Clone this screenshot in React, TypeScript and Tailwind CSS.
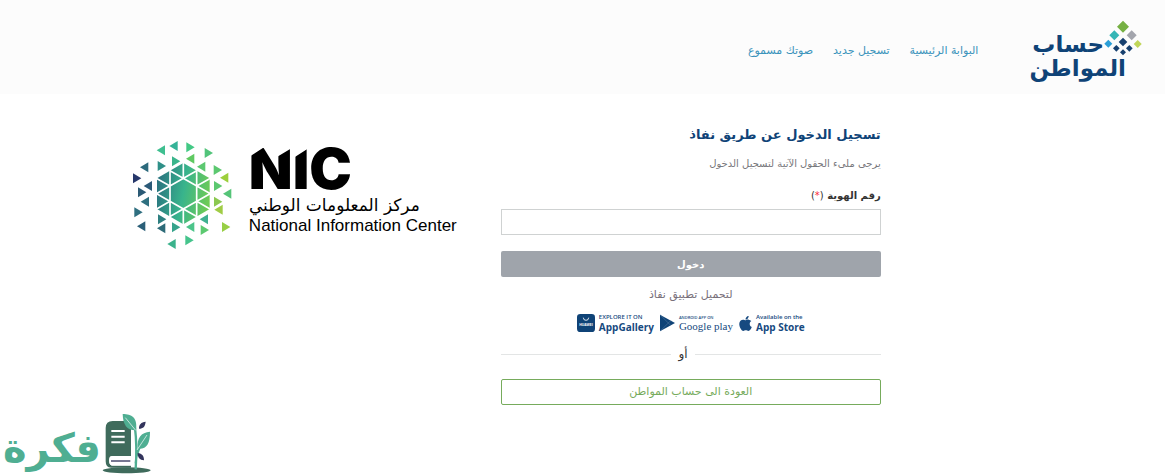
import React from 'react'
import { FaApple } from 'react-icons/fa'

const navLinks = [
    { title: 'البوابة الرئيسية', href: '#home' },
    { title: 'تسجيل جديد', href: '#register' },
    { title: 'صوتك مسموع', href: '#voice' },
]

// x, y, direction, color
const triangles: [number, number, 'l' | 'r', string][] = [
    [117, 61, 'l', '#3fbf90'],
    [155, 48, 'l', '#35b398'],
    [205, 52, 'r', '#43c985'],
    [260, 69, 'r', '#52c47a'],
    [205, 86, 'l', '#5fc962'],
    [162, 94, 'r', '#3ab58c'],
    [119, 108, 'r', '#2f9088'],
    [67, 112, 'l', '#2c6a7c'],
    [45, 145, 'r', '#27386b'],
    [78, 168, 'l', '#2b5a78'],
    [60, 187, 'r', '#2b5a75'],
    [69, 215, 'l', '#2f7080'],
    [49, 247, 'r', '#2f6f80'],
    [58, 289, 'l', '#2b5f78'],
    [118, 295, 'l', '#2d6b78'],
    [120, 268, 'r', '#2e7f80'],
    [162, 292, 'r', '#37a48c'],
    [205, 291, 'l', '#4cc48a'],
    [248, 300, 'r', '#5cc970'],
    [246, 268, 'l', '#3fb091'],
    [312, 291, 'r', '#98cf45'],
    [202, 331, 'r', '#45c48c'],
    [149, 342, 'l', '#3bb28c'],
    [290, 239, 'l', '#a0cc45'],
    [288, 215, 'r', '#8cc850'],
    [316, 191, 'l', '#55c478'],
    [288, 168, 'r', '#5cc870'],
    [307, 143, 'l', '#9ccf3c'],
    [287, 120, 'r', '#5cc870'],
    [238, 110, 'l', '#5cc870'],
]

// center x, center y, half diagonal, color
const diamonds: [number, number, number, string][] = [
    [341, 50, 18, '#76b043'],
    [315, 76, 15, '#35b5b5'],
    [367, 76, 15, '#a3a5ad'],
    [297, 101, 12, '#2a9fd8'],
    [385, 102, 12, '#c0d658'],
    [341, 96, 13, '#17406f'],
    [321, 115, 10, '#17406f'],
    [360, 115, 10, '#17406f'],
    [341, 127, 9, '#17406f'],
]

const CitizenLogo = () => {
    return (
        <a href="#home" className="block font-bold text-[#0f4377] text-[23px] leading-[24px] whitespace-nowrap">
            <span className="flex items-end">
                <svg className="w-[38px] h-[36px] shrink-0" viewBox="284 30 114 108" aria-hidden="true">
                    {diamonds.map(([x, y, r, color]) => (
                        <path key={`${x}-${y}`} fill={color} d={`M${x} ${y - r}L${x + r} ${y}L${x} ${y + r}L${x - r} ${y}Z`} />
                    ))}
                </svg>
                <span>حساب</span>
            </span>
            <span className="block pr-4">المواطن</span>
        </a>
    )
}

const NicLogo = () => {
    return (
        <div dir="ltr" className="flex items-start text-black">
            <svg className="w-[100px] h-[110px] shrink-0" viewBox="30 30 300 330" aria-hidden="true">
                <defs>
                    <linearGradient id="nic" gradientUnits="userSpaceOnUse" x1="105" y1="170" x2="263" y2="200">
                        <stop offset="0" stopColor="#2b7580" />
                        <stop offset="0.5" stopColor="#38b48c" />
                        <stop offset="1" stopColor="#6fcb55" />
                    </linearGradient>
                </defs>
                <path fill="url(#nic)" d="M184 99L263 145V237L184 283L105 237V145Z" />
                <path
                    fill="none"
                    stroke="#fff"
                    strokeWidth="5"
                    d="M144 118V264M224 118V264M184 95V145M184 237V287M100 193L228 120M100 189L228 262M268 193L140 120M268 189L140 262M100 143L144 168M100 239L144 214M268 143L224 168M268 239L224 214"
                />
                {triangles.map(([x, y, dir, color]) => (
                    <path
                        key={`${x}-${y}`}
                        fill={color}
                        d={dir === 'l' ? `M${x - 13} ${y}L${x + 12} ${y - 15}V${y + 15}Z` : `M${x + 13} ${y}L${x - 12} ${y - 15}V${y + 15}Z`}
                    />
                ))}
            </svg>
            <div className="ml-[17px] mt-[6px] whitespace-nowrap">
                <div className="font-[Inter,sans-serif] font-black text-[57px] leading-[46px] [clip-path:polygon(0_11px,14px_2px,27px_2px,28px_11px,43px_2px,46px_2px,46px_11px,60px_2px,60px_-4px,100%_-4px,100%_100%,0_100%)]">NIC</div>
                <div dir="rtl" className="mt-[2px] w-[171px] text-[17px] leading-[22px] text-right">مركز المعلومات الوطني</div>
                <div className="font-['Liberation_Sans',sans-serif] text-[17px] leading-[20px]">National Information Center</div>
            </div>
        </div>
    )
}

const Stores = () => {
    return (
        <div dir="ltr" className="mt-[6px] flex h-5 justify-center gap-[6px] whitespace-nowrap font-['Open_Sans',sans-serif] text-[#174a80]">
            <a href="#appgallery" className="flex items-center gap-1">
                <svg className="w-[18px] h-[18px]" viewBox="0 0 54 54" aria-hidden="true">
                    <rect width="54" height="54" rx="10" fill="#0f4377" />
                    <path d="M19 11a8 8 0 0 0 16 0" fill="none" stroke="#fff" strokeWidth="2.5" />
                    <text x="27" y="37" textAnchor="middle" fontSize="10" fontWeight="700" fill="#fff">HUAWEI</text>
                </svg>
                <span className="block">
                    <span className="block text-[6px] leading-[7px] font-semibold">EXPLORE IT ON</span>
                    <span className="block text-[10px] leading-[12px] font-bold">AppGallery</span>
                </span>
            </a>
            <a href="#googleplay" className="flex items-center gap-1">
                <svg className="w-[15px] h-[18px]" viewBox="0 0 45 54" aria-hidden="true">
                    <path d="M0 2L45 27L0 52Z" fill="#0f4377" />
                    <path d="M1 3L33 35M1 51L33 19" stroke="#5f83a8" strokeWidth="1.5" />
                </svg>
                <span className="block">
                    <span className="block text-[4px] leading-[5px] font-semibold">ANDROID APP ON</span>
                    <span className="block font-['Liberation_Serif',serif] text-[11px] leading-[12px]">Google play</span>
                </span>
            </a>
            <a href="#appstore" className="flex items-center gap-1">
                <FaApple className="w-[13px] h-[17px]" />
                <span className="block">
                    <span className="block text-[6px] leading-[7px] font-semibold">Available on the</span>
                    <span className="block text-[10px] leading-[12px] font-bold">App Store</span>
                </span>
            </a>
        </div>
    )
}

const Watermark = () => {
    return (
        <div className="absolute bottom-0 left-0 flex items-end text-[#4fae92]">
            <svg className="w-[50px] h-[62px]" viewBox="300 36 150 186" aria-hidden="true">
                <ellipse cx="377" cy="211" rx="72" ry="9" fill="#3f6b5c" />
                <path d="M314 84Q314 63 335 63H390V168H332Q324 168 324 181T332 197H390V203H330Q314 203 314 184Z" fill="#3f6b5c" />
                <path d="M332 171H390V196H332Q325 194 325 183T332 171Z" fill="#fff" />
                <path d="M330 183H388" stroke="#33345c" strokeWidth="4" />
                <path d="M331 93H371M331 110H371M331 127H371" stroke="#fff" strokeWidth="6" />
                <path d="M404 208C407 160 408 130 402 84L374 58M404 190C405 160 414 142 436 110" fill="none" stroke="#4fae92" strokeWidth="7" />
                <path d="M365 42C392 42 410 52 405 91C378 92 366 75 365 42Z" fill="#4fae92" />
                <path d="M447 95C447 130 437 149 410 146C407 112 420 98 447 95Z" fill="#4fae92" />
                <path d="M373 53L404 91M438 105L408 150" stroke="#fff" strokeWidth="2" />
                <path d="M434 65C432 80 427 86 414 86C414 73 420 67 434 65ZM410 159C424 161 429 168 429 181C416 180 410 173 410 159Z" fill="#33345c" />
            </svg>
            <span className="mb-1 ml-[3px] font-bold text-[40px] leading-[44px]">فكرة</span>
        </div>
    )
}

const App = () => {
    return (
        <div dir="rtl" className="relative min-h-screen bg-white font-['DejaVu_Sans',sans-serif]">
            <header className="flex h-[94px] items-start bg-[#fcfcfc] pr-[23px]">
                <div className="mt-5">
                    <CitizenLogo />
                </div>
                <nav className="mt-[41px] mr-[51px] flex gap-5 whitespace-nowrap text-[11px] leading-5 text-[#3a93bb]">
                    {navLinks.map((link) => (
                        <a key={link.href} href={link.href}>{link.title}</a>
                    ))}
                </nav>
            </header>

            <main className="flex items-start gap-11 pt-7 pr-[24.4%]">
                <form className="w-[380px] shrink-0" onSubmit={(e) => e.preventDefault()}>
                    <h1 className="text-[13px] leading-[26px] font-bold text-[#0f4377]">تسجيل الدخول عن طريق نفاذ</h1>
                    <p className="mt-1 text-[10px] leading-6 text-[#77777b]">يرجى ملىء الحقول الآتية لتسجيل الدخول</p>
                    <label htmlFor="identity" className="mt-2 block text-[10px] leading-6 font-bold text-[#333]">
                        رقم الهوية <span className="font-normal">(<span className="text-red-500">*</span>)</span>
                    </label>
                    <input id="identity" type="text" className="mt-px block h-[26px] w-full border border-[#cfd2d2] bg-white px-2 text-xs" />
                    <button type="submit" className="mt-4 block h-[26px] w-full rounded-xs bg-[#9fa4ab] text-[10px] font-bold text-white">دخول</button>
                    <p className="mt-[6px] text-center text-[11px] leading-6 text-[#78707a]">لتحميل تطبيق نفاذ</p>
                    <Stores />
                    <div className="mt-[11px] flex h-5 items-center gap-[5px] text-xs text-[#333]">
                        <span className="h-px flex-[12] bg-[#e3e5e5]" />
                        <span className="px-[2px]">أو</span>
                        <span className="h-px flex-[11] bg-[#e3e5e5]" />
                    </div>
                    <button type="button" className="mt-[15px] block h-[26px] w-full rounded-xs border border-[#76ab5c] text-[11px] text-[#76ab5c]">العودة الى حساب المواطن</button>
                </form>
                <div className="mt-[18px]">
                    <NicLogo />
                </div>
            </main>

            <Watermark />
        </div>
    )
}

export default App
